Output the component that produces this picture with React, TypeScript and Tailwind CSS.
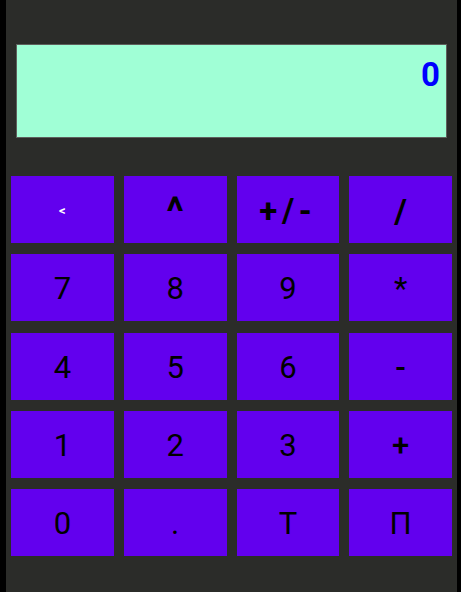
const keys: { label: string; cls?: string }[] = [
  { label: "<", cls: "text-white !text-[13px] font-bold" },
  { label: "^", cls: "!text-[40px] font-bold pt-[6px]" },
  { label: "+/-", cls: "!text-[33px] font-bold tracking-[0.14em]" },
  { label: "/", cls: "!text-[34px] font-bold" },
  { label: "7" },
  { label: "8" },
  { label: "9" },
  { label: "*" },
  { label: "4" },
  { label: "5" },
  { label: "6" },
  { label: "-", cls: "font-medium" },
  { label: "1" },
  { label: "2" },
  { label: "3" },
  { label: "+", cls: "font-medium" },
  { label: "0" },
  { label: "." },
  { label: "Т" },
  { label: "П" },
];

export default function App() {
  return (
    <div className="flex h-[592px] w-full bg-black pl-[6px] pr-[4px] font-['Roboto',sans-serif]">
      <div className="flex flex-1 flex-col bg-[#2b2c29]">
        {/* Экран */}
        <div className="mx-[10px] mt-[44px] flex h-[94px] justify-end border border-[#5e605c] bg-[#a0ffd6] px-[6px] pt-[13px]">
          <span className="text-[33px] font-bold leading-none text-[#0000ff]">0</span>
        </div>

        {/* Кнопки */}
        <div className="mt-[38px] grid grid-cols-4 gap-x-[10px] gap-y-[11.25px] px-[5px]">
          {keys.map((k, i) => (
            <button
              key={i}
              className={`flex h-[67px] items-center justify-center bg-[#6200ee] pt-[2px] text-[31px] leading-none text-black ${k.cls ?? ""}`}
            >
              {k.label}
            </button>
          ))}
        </div>
      </div>
    </div>
  );
}
